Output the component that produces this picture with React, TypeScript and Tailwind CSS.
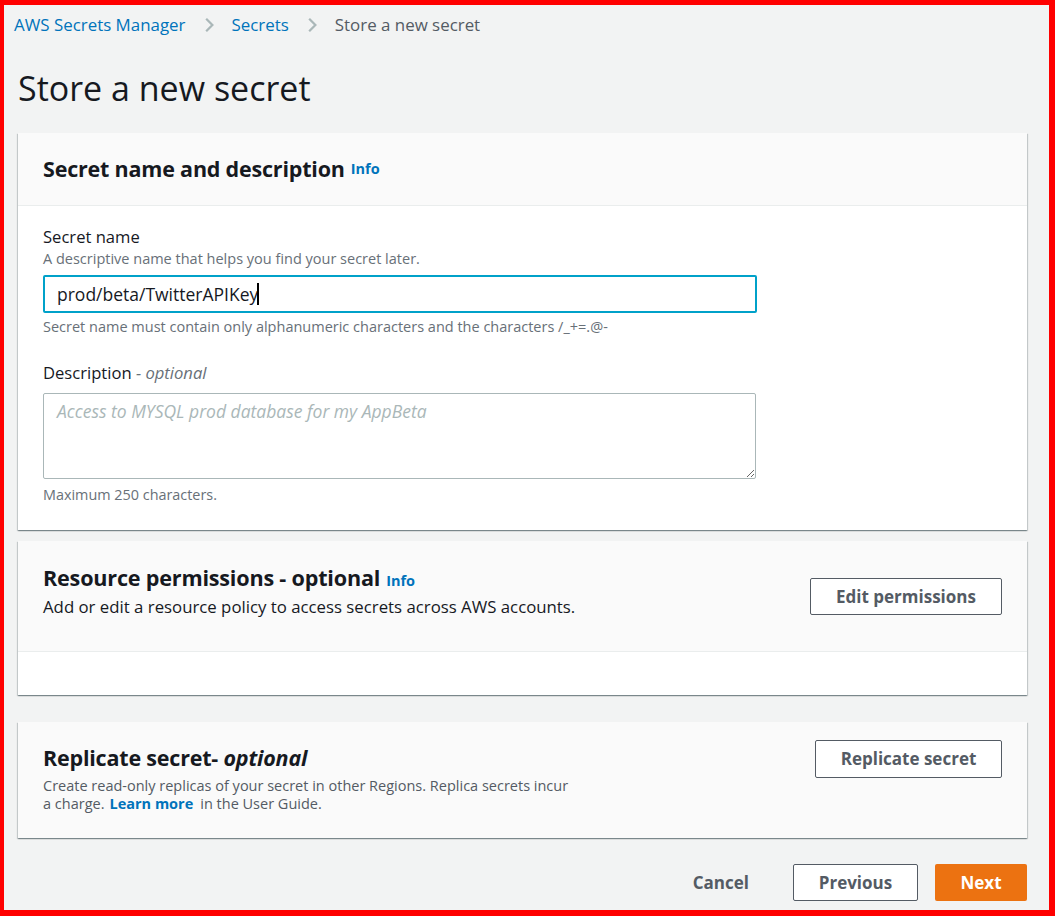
import React from "react";

// Breadcrumb chevron
const Chevron = () => (
  <svg className="mx-[14px] h-[18px] w-[18px]" viewBox="0 0 16 16" fill="none">
    <path d="M5.5 2.5 11 8l-5.5 5.5" stroke="#aab7b8" strokeWidth="2" />
  </svg>
);

const Info = () => (
  <a className="ml-[6px] text-[14.5px] font-bold text-[#0073bb]">Info</a>
);

const cardShadow =
  "shadow-[0_1px_1px_0_rgba(0,28,36,0.3),1px_1px_1px_0_rgba(0,28,36,0.15),-1px_1px_1px_0_rgba(0,28,36,0.15)]";

const App: React.FC = () => {
  return (
    <div className="h-[916px] w-[1055px] overflow-hidden border-t-[5px] border-l-[4px] border-r-[6px] border-b-[6px] border-[#ff0000] bg-[#f2f3f3] font-['Open_Sans',sans-serif] text-[#16191f]">
      {/* breadcrumb */}
      <nav className="flex items-center pl-[10px] pt-[9px] text-[16.9px] leading-[22px]">
        <a className="text-[#0073bb]">AWS Secrets Manager</a>
        <Chevron />
        <a className="text-[#0073bb]">Secrets</a>
        <Chevron />
        <span className="text-[#545b64]">Store a new secret</span>
      </nav>

      <h1 className="mt-[30px] pl-[14px] text-[34px] font-normal leading-[44px]">
        Store a new secret
      </h1>

      <div className="mt-[23px] flex flex-col pl-[14px] pr-[22px]">
        {/* Secret name and description */}
        <section className={`bg-white ${cardShadow}`}>
          <div className="flex h-[73px] items-center border-b border-[#eaeded] bg-[#fafafa] px-[25px]">
            <h2 className="text-[21.5px] font-bold tracking-[-0.2px]">
              Secret name and description
            </h2>
            <Info />
          </div>
          <div className="px-[25px] pt-[20px] pb-[25px]">
            <label className="block text-[16.6px] leading-[22px]">Secret name</label>
            <p className="text-[14.5px] leading-[22px] text-[#687078]">
              A descriptive name that helps you find your secret later.
            </p>
            <div className="mt-[5px] flex h-[38px] w-[714px] items-center rounded-[2px] border-2 border-[#00a1c9] px-[12px] text-[17.5px]">
              <span>prod/beta/TwitterAPIKey</span>
              <span className="ml-[-1px] h-[22px] w-[1.5px] bg-black" />
            </div>
            <p className="mt-[4px] text-[14.5px] leading-[20px] text-[#687078]">
              Secret name must contain only alphanumeric characters and the characters /_+=.@-
            </p>

            <label className="mt-[25px] block text-[16.6px] leading-[22px]">
              Description <span className="italic text-[#687078]">- optional</span>
            </label>
            <textarea
              readOnly
              placeholder="Access to MYSQL prod database for my AppBeta"
              className="mt-[9px] block h-[86px] w-[713px] rounded-[2px] border border-[#aab7b8] bg-white px-[13px] py-[4px] text-[17.5px] italic placeholder:text-[#aab7b8] outline-none"
            />
            <p className="mt-[6px] text-[14.4px] leading-[20px] text-[#687078]">
              Maximum 250 characters.
            </p>
          </div>
        </section>

        {/* Resource permissions */}
        <section className={`mt-[11px] bg-white ${cardShadow}`}>
          <div className="flex h-[111px] items-start justify-between border-b border-[#eaeded] bg-[#fafafa] px-[25px] pt-[22px]">
            <div>
              <div className="flex items-baseline">
                <h2 className="text-[21.6px] font-bold leading-[30px] tracking-[-0.2px]">
                  Resource permissions - optional
                </h2>
                <Info />
              </div>
              <p className="mt-[2px] text-[16.8px] leading-[24px]">
                Add or edit a resource policy to access secrets across AWS accounts.
              </p>
            </div>
            <button className="mt-[15px] h-[37px] w-[192px] rounded-[2px] border border-[#545b64] bg-white text-[17px] font-bold text-[#545b64]">
              Edit permissions
            </button>
          </div>
          <div className="h-[43px]" />
        </section>

        {/* Replicate secret */}
        <section className={`mt-[27px] flex h-[116px] items-start justify-between bg-[#fafafa] px-[25px] pt-[20px] ${cardShadow}`}>
          <div>
            <h2 className="text-[21.5px] font-bold leading-[32px] tracking-[-0.2px]">
              Replicate secret- <span className="italic">optional</span>
            </h2>
            <div className="mt-[3px] w-[530px] text-[14.5px] leading-[18px] text-[#545b64]">
              <p>Create read-only replicas of your secret in other Regions. Replica secrets incur</p>
              <p className="flex gap-[5px]">
                <span>a charge.</span>
                <a className="font-bold text-[#0073bb]">Learn more</a>
                <span className="ml-[2px]">in the User Guide.</span>
              </p>
            </div>
          </div>
          <button className="mt-[-2px] h-[38px] w-[187px] rounded-[2px] border border-[#545b64] bg-white text-[17px] font-bold text-[#545b64]">
            Replicate secret
          </button>
        </section>

        {/* footer actions */}
        <div className="mt-[26px] flex items-center justify-end">
          <button className="mr-[44px] text-[17px] font-bold text-[#545b64]">Cancel</button>
          <button className="h-[37px] w-[125px] rounded-[2px] border border-[#545b64] bg-white text-[17px] font-bold text-[#545b64]">
            Previous
          </button>
          <button className="ml-[17px] h-[37px] w-[92px] rounded-[2px] bg-[#ec7211] text-[17px] font-bold text-white">
            Next
          </button>
        </div>
      </div>
    </div>
  );
};

export default App;
